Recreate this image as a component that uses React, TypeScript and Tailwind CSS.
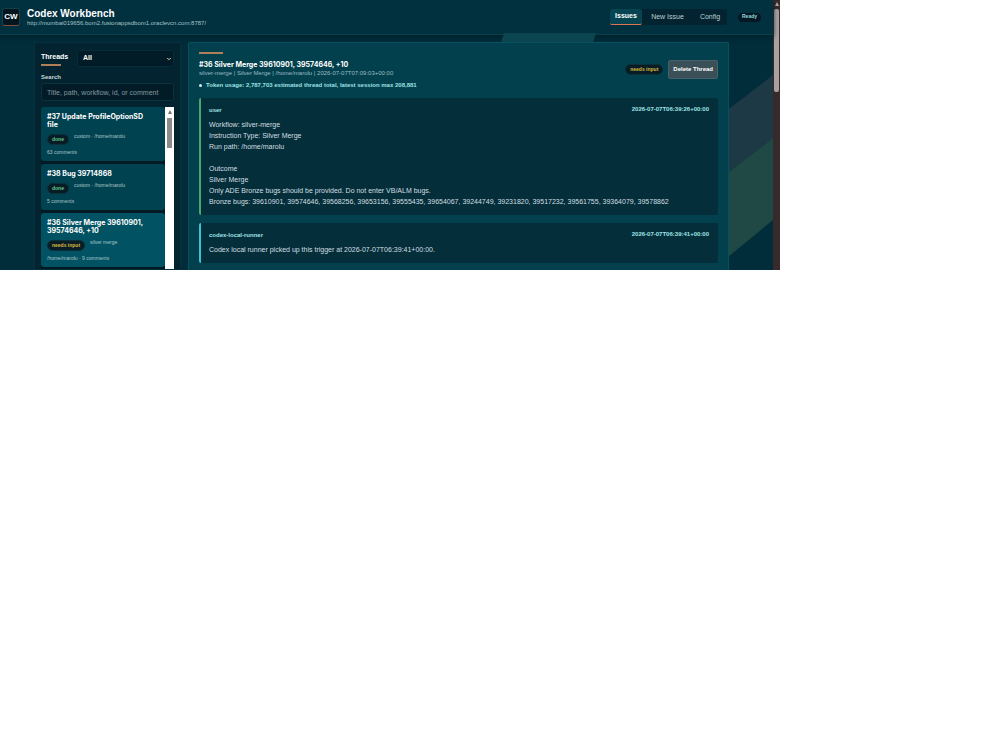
import { clsx } from "clsx";
import { ChevronDown } from "lucide-react";

const threads = [
  {
    id: 37,
    title: "#37 Update ProfileOptionSD file",
    status: "done",
    meta: "custom · /home/marolu",
    footer: "63 comments",
  },
  {
    id: 38,
    title: "#38 Bug 39714868",
    status: "done",
    meta: "custom · /home/marolu",
    footer: "5 comments",
  },
  {
    id: 36,
    title: "#36 Silver Merge 39610901, 39574646, +10",
    status: "needs input",
    meta: "silver merge",
    footer: "/home/marolu · 9 comments",
    active: true,
  },
];

const messages = [
  {
    author: "user",
    time: "2026-07-07T06:39:26+00:00",
    body: `Workflow: silver-merge
Instruction Type: Silver Merge
Run path: /home/marolu

Outcome
Silver Merge
Only ADE Bronze bugs should be provided. Do not enter VB/ALM bugs.
Bronze bugs: 39610901, 39574646, 39568256, 39653156, 39555435, 39654067, 39244749, 39231820, 39517232, 39561755, 39364079, 39578862`,
  },
  {
    author: "codex-local-runner",
    time: "2026-07-07T06:39:41+00:00",
    body: "Codex local runner picked up this trigger at 2026-07-07T06:39:41+00:00.",
  },
];

const Backdrop = () => {
  return (
    <svg
      aria-hidden="true"
      className="absolute inset-0 h-full w-full"
      viewBox="0 0 773 270"
      preserveAspectRatio="none"
    >
      <path d="M504 33h92l-3 10h-92z" fill="#0b4650" />
      <path d="M700 131 773 75v63l-73 56z" fill="#1d3946" />
      <path d="M700 194 773 138v82l-73 60z" fill="#204844" />
    </svg>
  );
};

const Header = () => {
  return (
    <header className="relative flex h-[35px] items-center border-b border-[#07404d] bg-[#01303f] pr-3 pl-[2px] shadow-[0_2px_5px_#01202b]">
      <div className="flex h-[18px] w-[18px] items-center justify-center rounded-[3px] border border-[#12404b] border-b-[#8a4a3c] bg-[#05151f] text-[8px] font-bold">
        CW
      </div>
      <div className="ml-[7px] flex-1">
        <h1 className="text-[10px] leading-[11px] font-bold">Codex Workbench</h1>
        <p className="text-[6px] leading-[8px] text-[#a5c3c8]">
          http://mumbai019656.bom2.fusionappsdbom1.oraclevcn.com:8787/
        </p>
      </div>
      <nav className="flex h-4 rounded-[2px] bg-[#02232f] text-[7px] text-[#bfd2d5]">
        <a
          href="#issues"
          className="flex w-8 items-center justify-center rounded-[2px] border-b border-[#e0764f] bg-[#074451] font-bold text-white"
        >
          Issues
        </a>
        <a href="#new" className="flex w-[51px] items-center justify-center">
          New Issue
        </a>
        <a href="#config" className="flex w-[34px] items-center justify-center">
          Config
        </a>
      </nav>
      <span className="ml-[11px] flex h-[9px] w-[23px] items-center justify-center rounded-full bg-[#041722] text-[5px] font-bold text-[#93dcdf]">
        Ready
      </span>
    </header>
  );
};

interface StatusChipProps {
  status: string;
}

const StatusChip = ({ status }: StatusChipProps) => {
  return (
    <span
      className={clsx(
        "flex h-[11px] shrink-0 items-center rounded-full border border-[#0b3039] bg-[#081c25] px-1 text-[5px] font-bold",
        status === "done" ? "text-[#5fc98d]" : "text-[#d9b93f]",
      )}
    >
      {status}
    </span>
  );
};

const Sidebar = () => {
  return (
    <aside className="flex w-[147px] shrink-0 flex-col border border-[#05313e] bg-[#02232f] px-[6px] pt-[7px]">
      <div className="flex items-start">
        <h2 className="w-[36px] text-[7px] leading-[14px] font-bold">
          Threads
          <span className="block h-[2px] w-5 bg-[#b07f58]" />
        </h2>
        <div className="relative flex-1">
          <select
            aria-label="Filter threads"
            className="block h-[17px] w-full appearance-none rounded-[2px] border border-[#052e3a] bg-[#021c27] px-[5px] text-[7px] font-bold"
          >
            <option>All</option>
          </select>
          <ChevronDown
            className="pointer-events-none absolute top-[6px] right-[2px] h-[6px] w-[6px] text-[#ecd3ae]"
            strokeWidth={4}
          />
        </div>
      </div>
      <label htmlFor="search" className="mt-[6px] text-[6px] leading-[8px] font-bold text-[#c9d8da]">
        Search
      </label>
      <input
        id="search"
        type="search"
        placeholder="Title, path, workflow, id, or comment"
        className="mt-[2px] h-[18px] shrink-0 rounded-[2px] border border-[#07323e] bg-[#021c27] px-[5px] text-[7px] placeholder:text-[#82999f]"
      />
      <div className="mt-[6px] flex min-h-0 flex-1 overflow-hidden">
        <ul className="flex min-w-0 flex-1 flex-col gap-[3px] bg-[#021a24]">
          {threads.map((thread) => (
            <li key={thread.id}>
              <a
                href={`#${thread.id}`}
                className={clsx(
                  "block rounded-[3px] pt-[6px] pr-3 pb-[5px] pl-[6px]",
                  thread.active ? "bg-[#015363]" : "bg-[#014250]",
                )}
              >
                <h3 className="font-[Inter,sans-serif] text-[7px] leading-[8px] font-bold">{thread.title}</h3>
                <div className="mt-[5px] flex gap-[5px]">
                  <StatusChip status={thread.status} />
                  <span className="text-[5px] leading-[5px] text-[#a9c5ca]">{thread.meta}</span>
                </div>
                <p className="mt-[3px] text-[5px] leading-[8px] text-[#a9c5ca]">{thread.footer}</p>
              </a>
            </li>
          ))}
        </ul>
        <div className="flex w-[9px] flex-col items-center bg-white">
          <span className="mt-[3px] border-x-2 border-b-4 border-x-transparent border-b-[#777]" />
          <span className="mt-[4px] h-[30px] w-[5px] bg-[#8b8b8b]" />
        </div>
      </div>
    </aside>
  );
};

const ThreadDetail = () => {
  return (
    <main className="min-w-0 flex-1 rounded-t-[2px] border-x border-t border-[#07505d] bg-[#02404d] px-[10px] pt-[9px]">
      <div className="h-[2px] w-6 bg-[#b07f58]" />
      <div className="mt-[6px] flex items-start">
        <div className="flex-1">
          <h2 className="font-[Inter,sans-serif] text-[7px] leading-[10px] font-bold">
            #36 Silver Merge 39610901, 39574646, +10
          </h2>
          <p className="text-[6px] leading-[7px] text-[#9bbcc2]">
            silver-merge | Silver Merge | /home/marolu | 2026-07-07T07:09:03+00:00
          </p>
        </div>
        <div className="flex items-center gap-[5px]">
          <StatusChip status="needs input" />
          <button
            type="button"
            className="h-[19px] rounded-[2px] border border-[#46616a] bg-[#3b4f58] px-1 text-[6px] font-bold"
          >
            Delete Thread
          </button>
        </div>
      </div>
      <details className="mt-[2px] text-[6px] leading-[8px] font-bold text-[#9ee0e3]">
        <summary className="flex list-none items-center gap-[4px]">
          <span className="h-[3px] w-[3px] rounded-full bg-[#c9eef0]" />
          Token usage: 2,787,703 estimated thread total, latest session max 208,881
        </summary>
        <p>2,787,703</p>
      </details>
      <div className="mt-[9px] flex flex-col gap-2">
        {messages.map((message) => (
          <article
            key={message.author}
            className={clsx(
              "rounded-[2px] border-l-2 bg-[#032e3a] pt-[6px] pr-[9px] pb-[8px] pl-2",
              message.author === "user" ? "border-[#48a871]" : "border-[#3fc1d3]",
            )}
          >
            <div className="flex justify-between text-[6px] leading-[10px] font-bold text-[#a0e3e6]">
              <span className="pt-px">{message.author}</span>
              <time>{message.time}</time>
            </div>
            <p className="mt-[4px] text-[7px] leading-[11px] whitespace-pre-wrap text-[#d3dfe0]">
              {message.body}
            </p>
          </article>
        ))}
      </div>
    </main>
  );
};

export default function App() {
  return (
    <div className="min-h-screen bg-white font-['Liberation_Sans',sans-serif] text-white">
      <div className="flex h-[36vh] w-[78%] overflow-hidden">
        <div className="relative flex min-w-0 flex-1 flex-col bg-[#012c3a]">
          <Header />
          <Backdrop />
          <div className="relative flex min-h-0 flex-1 gap-[7px] pt-[7px] pr-[44px] pl-[34px]">
            <Sidebar />
            <ThreadDetail />
          </div>
        </div>
        <div className="flex w-[7px] flex-col items-center bg-[#372a2b]">
          <span className="mt-[2px] border-x-2 border-b-4 border-x-transparent border-b-[#b5aba7]" />
          <span className="mt-[3px] h-[83px] w-[5px] rounded-[2px] bg-[#aaa19f]" />
        </div>
      </div>
    </div>
  );
}
